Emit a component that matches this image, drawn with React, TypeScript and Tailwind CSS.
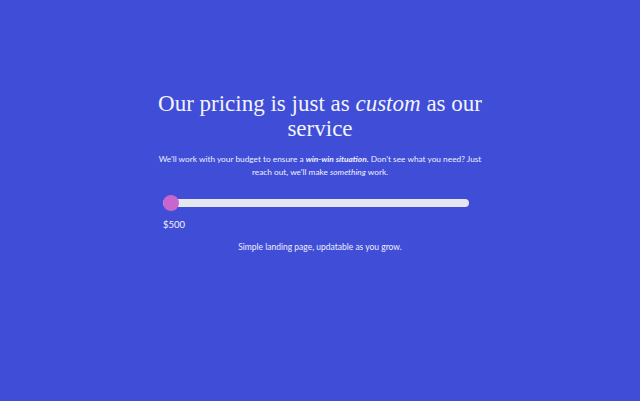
import React, { useState } from "react";

export default function App() {
  const [value, setValue] = useState(500);
  const min = 500;
  const max = 10000;
  const pct = ((value - min) / (max - min)) * 100;

  return (
    <div className="w-[640px] h-[401px] bg-[#3f4dd7] flex flex-col items-center text-white overflow-hidden">
      <div className="w-[320px] mt-[91px] flex flex-col items-center">
        <h1
          className="w-[340px] text-center text-[23px] leading-[25px] text-[#f3f3fb]"
          style={{ fontFamily: '"Liberation Serif", serif' }}
        >
          Our pricing is just as <em>custom</em> as our service
        </h1>
        <p
          className="w-[340px] mt-[12px] text-center text-[8.3px] leading-[13px] text-[#eef0fb]"
          style={{ fontFamily: 'Lato, "Noto Sans", sans-serif' }}
        >
          We'll work with your budget to ensure a{" "}
          <strong className="font-bold italic">win-win situation.</strong> Don't see what you need? Just
          <br />
          reach out, we'll make <em>something</em> work.
        </p>
        <div className="mt-[16px] w-full pl-[3px] pr-[11px]">
          <div className="relative h-[16px] flex items-center">
            <div className="w-full h-[8px] rounded-full bg-[#e6e6ee]" />
            <div
              className="absolute top-0 w-[16px] h-[16px] rounded-full bg-[#c766cc]"
              style={{ left: `calc(${pct}% - ${pct * 0.16}px)` }}
            />
            <input
              type="range"
              min={min}
              max={max}
              step={100}
              value={value}
              onChange={(e) => setValue(Number(e.target.value))}
              className="absolute inset-0 w-full opacity-0 cursor-pointer"
            />
          </div>
          <div
            className="mt-[7px] text-[9.5px] text-[#f3f3fb]"
            style={{ fontFamily: 'Lato, "Noto Sans", sans-serif' }}
          >
            ${value}
          </div>
        </div>
        <p
          className="mt-[9px] text-center text-[8.5px] text-[#eef0fb]"
          style={{ fontFamily: 'Lato, "Noto Sans", sans-serif' }}
        >
          Simple landing page, updatable as you grow.
        </p>
      </div>
    </div>
  );
}
